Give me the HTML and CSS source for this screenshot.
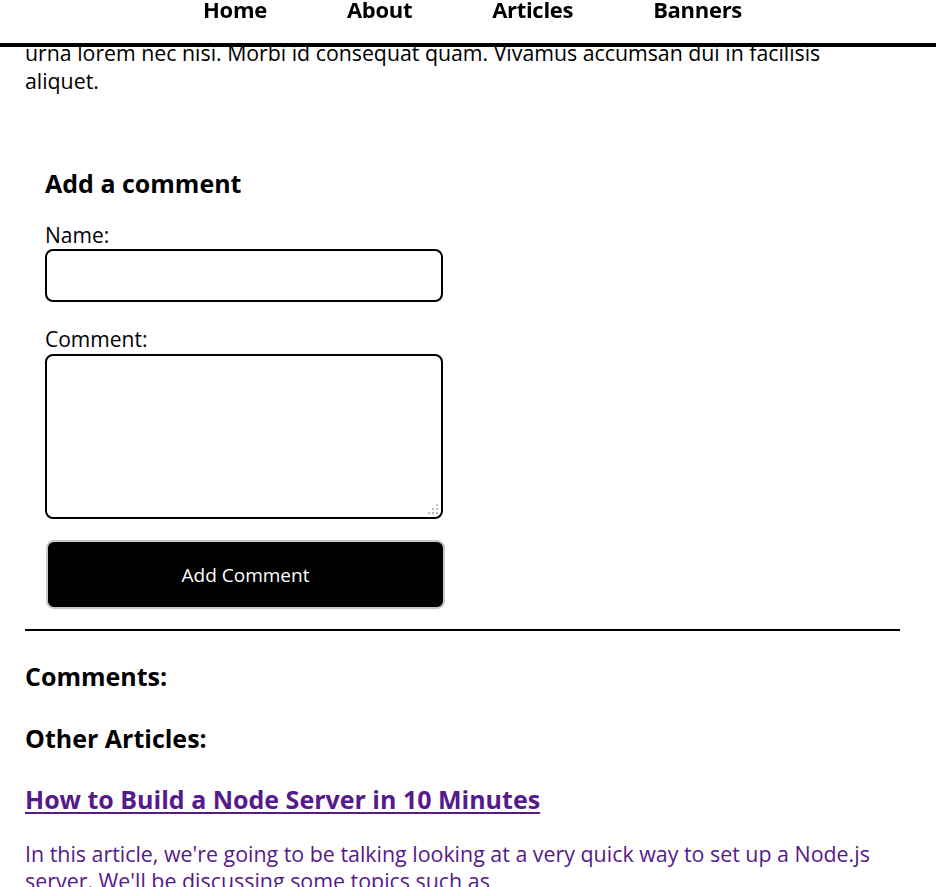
FILE: index.html
```html
<!DOCTYPE html>
<html lang="en">
<head>
<meta charset="utf-8">
<title>Article</title>
<link rel="stylesheet" href="styles.css">
</head>
<body>
<header class="topbar">
  <nav class="nav">
    <a class="nav-link" href="#">Home</a>
    <a class="nav-link" href="#">About</a>
    <a class="nav-link" href="#">Articles</a>
    <a class="nav-link" href="#">Banners</a>
  </nav>
</header>
<main class="page">
  <p class="intro">urna lorem nec nisi. Morbi id consequat quam. Vivamus accumsan dui in facilisis aliquet.</p>
  <form class="comment-form">
    <h3 class="form-title">Add a comment</h3>
    <label class="field-label" for="name">Name:</label>
    <input class="field-input" id="name" type="text">
    <label class="field-label" for="comment">Comment:</label>
    <div class="area-wrap">
      <textarea class="field-area" id="comment"></textarea>
      <svg class="grip" width="11" height="11" viewBox="0 0 11 11" aria-hidden="true">
        <rect x="8" y="0" width="2" height="2"/>
        <rect x="4" y="4" width="2" height="2"/>
        <rect x="8" y="4" width="2" height="2"/>
        <rect x="0" y="8" width="2" height="2"/>
        <rect x="4" y="8" width="2" height="2"/>
        <rect x="8" y="8" width="2" height="2"/>
      </svg>
    </div>
    <button class="submit-btn" type="button">Add Comment</button>
  </form>
  <hr class="divider">
  <h3 class="section-title comments-title">Comments:</h3>
  <h3 class="section-title">Other Articles:</h3>
  <a class="article-link" href="#">
    <h3 class="article-title">How to Build a Node Server in 10 Minutes</h3>
    <p class="article-summary">In this article, we're going to be talking looking at a very quick way to set up a Node.js server. We'll be discussing some topics such as</p>
  </a>
</main>
</body>
</html>
```
FILE: styles.css
```css
html, body {
  margin: 0;
  padding: 0;
  background: #fff;
}
body {
  font-family: "Open Sans", "Noto Sans", sans-serif;
  font-size: 21px;
  color: #000;
  overflow: hidden;
  height: 887px;
}
.topbar {
  position: fixed;
  top: 0;
  left: 0;
  right: 0;
  height: 43px;
  background: #fff;
  border-bottom: 4px solid #000;
  z-index: 10;
}
.nav {
  display: flex;
  justify-content: center;
  gap: 80px;
  padding-left: 9px;
}
.nav-link {
  font-weight: 700;
  font-size: 22px;
  line-height: 18px;
  color: #000;
  text-decoration: none;
  letter-spacing: -0.3px;
}
.page {
  padding: 39px 36px 0 25px;
}
.intro {
  margin: 0;
  max-width: 840px;
  font-size: 21.3px;
  line-height: 28px;
}
.comment-form {
  display: flex;
  flex-direction: column;
  align-items: flex-start;
  margin-top: 53px;
  padding: 20px;
}
.form-title,
.section-title,
.article-title {
  font-size: 25px;
  font-weight: 700;
  line-height: 30px;
  margin: 0;
}
.form-title {
  margin-bottom: 24px;
}
.field-label {
  line-height: 26px;
  margin-bottom: 1px;
}
.field-input,
.field-area {
  box-sizing: border-box;
  width: 398px;
  border: 2px solid #000;
  border-radius: 8px;
  font-family: inherit;
  font-size: 16px;
  padding: 4px 8px;
  background: #fff;
}
.field-input {
  height: 53px;
  margin: 0 0 24px;
}
.area-wrap {
  position: relative;
  width: 398px;
  height: 165px;
  margin: 1px 0 21px;
}
.field-area {
  display: block;
  height: 165px;
  margin: 0;
  resize: none;
}
.grip {
  position: absolute;
  right: 4px;
  bottom: 4px;
  fill: #bcbcbc;
}
.submit-btn {
  box-sizing: border-box;
  width: 399px;
  height: 69px;
  margin-left: 1px;
  background: #000;
  color: #fff;
  border: 2px solid #c8c8c8;
  border-radius: 8px;
  font-family: inherit;
  font-size: 19px;
}
.divider {
  border: none;
  height: 2px;
  background: #000;
  margin: 0;
}
.comments-title {
  margin-top: 30px;
}
.section-title + .section-title {
  margin-top: 32px;
}
.article-link {
  display: block;
  color: #551a8b;
  text-decoration: none;
  margin-top: 31px;
}
.article-title {
  text-decoration: underline;
  text-decoration-thickness: 2px;
  text-underline-offset: 3px;
}
.article-summary {
  margin: 26px 0 0;
  font-size: 21.4px;
  line-height: 27px;
}
```
